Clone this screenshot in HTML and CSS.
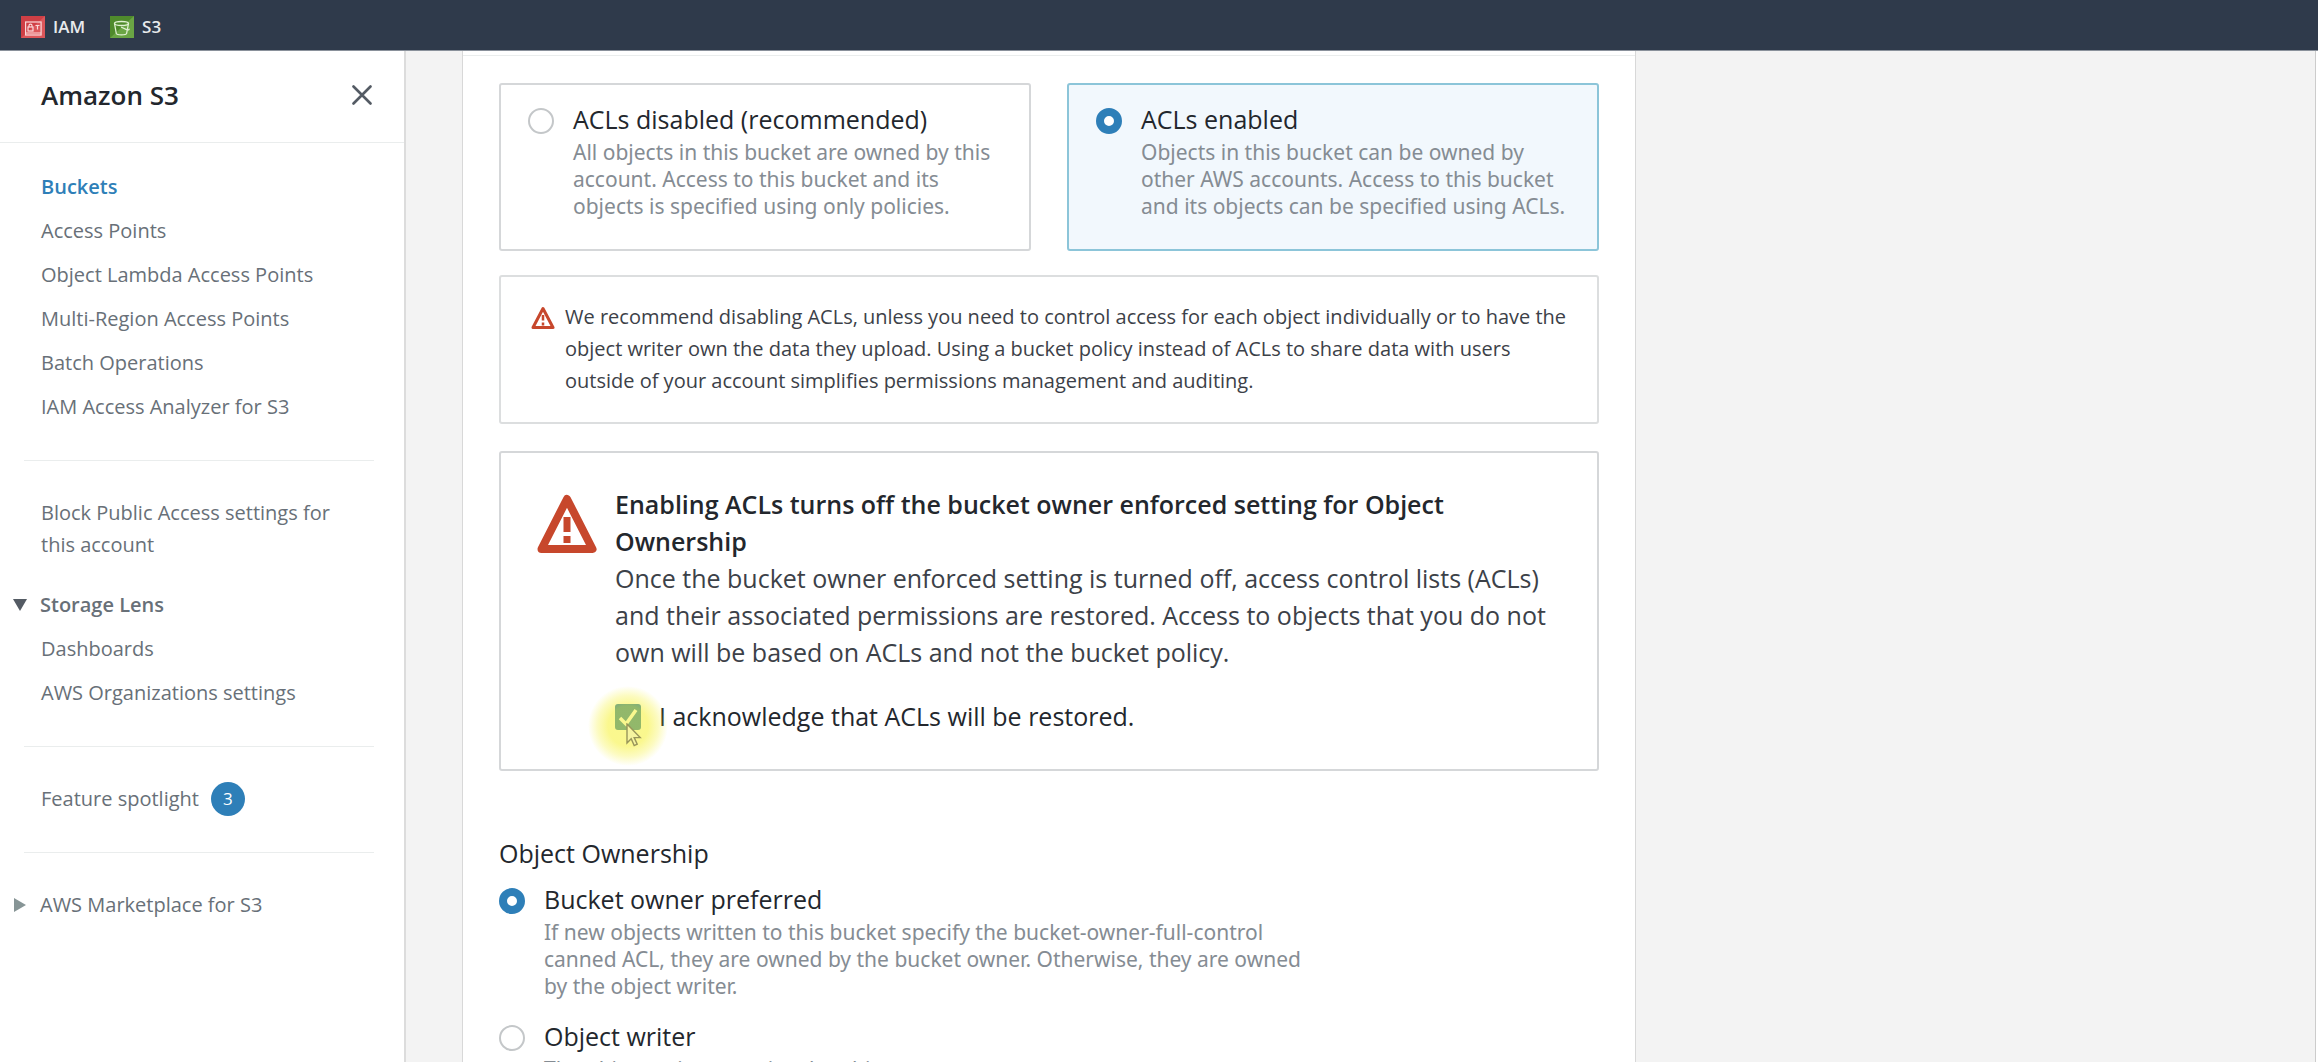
FILE: index.html
```html
<!DOCTYPE html>
<html lang="en">
<head>
<meta charset="utf-8">
<title>Amazon S3</title>
<link rel="stylesheet" href="styles.css">
</head>
<body>
<header class="topbar">
  <a class="shortcut" href="#iam">
    <svg class="service-icon" viewBox="0 0 24 22" aria-hidden="true">
      <rect width="24" height="22" fill="#cf3f45"/>
      <path d="M0 22L24 0v22z" fill="#dc565a"/>
      <g fill="none" stroke="#fbd9da" stroke-width="1.2">
        <rect x="4.600" y="6" width="15.500" height="13"/>
        <rect x="7" y="11" width="5" height="4"/>
        <path d="M8 11V9.600a1.500 1.500 0 0 1 3 0V11M14.500 9.500h4M16.500 9.500v4M5 17h15"/>
      </g>
    </svg>
    IAM
  </a>
  <a class="shortcut" href="#s3">
    <svg class="service-icon" viewBox="0 0 24 22" aria-hidden="true">
      <rect width="24" height="22" fill="#4f8a2c"/>
      <path d="M0 22L24 0v22z" fill="#6aa544"/>
      <g fill="none" stroke="#e0f0d2" stroke-width="1.300">
        <ellipse cx="11.500" cy="7.500" rx="7" ry="2"/>
        <path d="M4.500 7.500l1.800 10c.3 1.800 10 1.800 10.300 0l1.900-10M11 11l5.500 2.600c2 .8 3 .2 2.400-.9"/>
      </g>
    </svg>
    S3
  </a>
</header>
<div class="layout">
  <aside class="sidebar">
    <div class="sidebar-head">
      <h2 class="sidebar-title">Amazon S3</h2>
      <button class="close" type="button" aria-label="Close navigation">
        <svg viewBox="0 0 20 20" width="20" height="20" aria-hidden="true"><path d="M1.500 1.500l17 17M18.500 1.500l-17 17" stroke="#545b64" stroke-width="2.600" stroke-linecap="round"/></svg>
      </button>
    </div>
    <nav class="nav">
      <ul class="nav-list">
        <li><a class="current" href="#buckets">Buckets</a></li>
        <li><a href="#access-points">Access Points</a></li>
        <li><a href="#lambda">Object Lambda Access Points</a></li>
        <li><a href="#multi-region">Multi-Region Access Points</a></li>
        <li><a href="#batch">Batch Operations</a></li>
        <li><a href="#analyzer">IAM Access Analyzer for S3</a></li>
      </ul>
      <hr class="divider">
      <ul class="nav-list">
        <li><a href="#block-public">Block Public Access settings for this account</a></li>
      </ul>
      <button class="section open" type="button" aria-expanded="true">
        <svg viewBox="0 0 14 14" width="14" height="14" aria-hidden="true"><path d="M0 1h14L7 13z" fill="#545b64"/></svg>Storage Lens
      </button>
      <ul class="nav-list">
        <li><a href="#dashboards">Dashboards</a></li>
        <li><a href="#organizations">AWS Organizations settings</a></li>
      </ul>
      <hr class="divider">
      <ul class="nav-list">
        <li><a class="with-badge" href="#spotlight">Feature spotlight <span class="badge">3</span></a></li>
      </ul>
      <hr class="divider">
      <button class="section" type="button" aria-expanded="false">
        <svg viewBox="0 0 14 14" width="14" height="14" aria-hidden="true"><path d="M1 0v14L13 7z" fill="#879596"/></svg>AWS Marketplace for S3
      </button>
    </nav>
  </aside>
  <main class="main">
    <section class="panel">
      <div class="panel-head"></div>
      <div class="panel-body">
      <div class="tiles">
        <label class="tile">
          <input class="radio" type="radio" name="acl">
          <span class="choice-text"><span class="choice-title">ACLs disabled (recommended)</span>
          <span class="choice-desc">All objects in this bucket are owned by this account. Access to this bucket and its objects is specified using only policies.</span></span>
        </label>
        <label class="tile selected">
          <input class="radio" type="radio" name="acl" checked>
          <span class="choice-text"><span class="choice-title">ACLs enabled</span>
          <span class="choice-desc">Objects in this bucket can be owned by other AWS accounts. Access to this bucket and its objects can be specified using ACLs.</span></span>
        </label>
      </div>
      <div class="notice">
        <svg class="notice-icon" viewBox="0 0 48 48" aria-hidden="true"><path d="M24 5L44 43H4z" fill="none" stroke="#c7472c" stroke-width="6" stroke-linejoin="round"/><path d="M24 18v11M24 33v6" stroke="#c7472c" stroke-width="5"/></svg>
        <p class="notice-text">We recommend disabling ACLs, unless you need to control access for each object individually or to have the object writer own the data they upload. Using a bucket policy instead of ACLs to share data with users outside of your account simplifies permissions management and auditing.</p>
      </div>
      <div class="confirm">
        <svg class="confirm-icon" viewBox="0 0 60 60" aria-hidden="true"><path d="M30 5L55.500 55H4.500z" fill="none" stroke="#c7472c" stroke-width="8" stroke-linejoin="round"/><path d="M30 23v15M30 42v7" stroke="#c7472c" stroke-width="7"/></svg>
        <div class="confirm-body">
          <h3 class="confirm-title">Enabling ACLs turns off the bucket owner enforced setting for Object Ownership</h3>
          <p class="confirm-text">Once the bucket owner enforced setting is turned off, access control lists (ACLs) and their associated permissions are restored. Access to objects that you do not own will be based on ACLs and not the bucket policy.</p>
          <label class="ack">
            <span class="ack-box"><input class="checkbox" type="checkbox" checked>
              <svg class="tick" viewBox="0 0 26 26" aria-hidden="true"><path d="M5 14l6 6L21 6" fill="none" stroke="#fff" stroke-width="3.500"/></svg>
              <span class="halo"></span>
              <svg class="pointer" viewBox="0 0 16 24" aria-hidden="true"><path d="M1 1v19l4.200-4.200 3 6.800 3-1.400-3-6.600h6z" fill="#f6f4a0" stroke="#98955a" stroke-width="1.400"/></svg>
            </span>
            I acknowledge that ACLs will be restored.
          </label>
        </div>
      </div>
      <fieldset class="ownership">
        <legend class="legend">Object Ownership</legend>
        <label class="choice">
          <input class="radio" type="radio" name="owner" checked>
          <span class="choice-text"><span class="choice-title">Bucket owner preferred</span>
          <span class="choice-desc">If new objects written to this bucket specify the bucket-owner-full-control canned ACL, they are owned by the bucket owner. Otherwise, they are owned by the object writer.</span></span>
        </label>
        <label class="choice">
          <input class="radio" type="radio" name="owner">
          <span class="choice-text"><span class="choice-title">Object writer</span>
          <span class="choice-desc">The object writer remains the object owner.</span></span>
        </label>
      </fieldset>
      </div>
    </section>
  </main>
  <aside class="tools"></aside>
</div>
</body>
</html>
```
FILE: styles.css
```css
* { box-sizing: border-box; }
body {
  margin: 0;
  height: 100vh;
  display: flex;
  flex-direction: column;
  overflow: hidden;
  background: #f3f3f3;
  color: #23272d;
  font: 20px/32px "Open Sans", "Noto Sans", sans-serif;
}
h2, h3, p, ul { margin: 0; padding: 0; }
ul { list-style: none; }
a { color: inherit; text-decoration: none; }
button { font: inherit; color: inherit; border: 0; padding: 0; background: none; cursor: pointer; }
label { cursor: pointer; }

.topbar {
  flex: none;
  display: flex;
  gap: 25px;
  height: 51px;
  padding: 3px 21px 0;
  background: #2f3a4b;
  border-bottom: 1px solid #8a919b;
  color: #e8eaed;
  font-size: 17px;
  font-weight: 600;
}
.shortcut { display: flex; align-items: center; gap: 8px; }
.service-icon { width: 24px; height: 22px; }

.layout { flex: 1; min-height: 0; display: flex; }
.sidebar { flex: none; width: 406px; background: #fff; border-right: 2px solid #dcdcdc; overflow: hidden; }
.sidebar-head {
  display: flex;
  align-items: center;
  justify-content: space-between;
  height: 92px;
  padding: 0 32px 4px 41px;
  border-bottom: 1px solid #eaeded;
}
.sidebar-title { font-size: 26px; line-height: 36px; font-weight: 600; }
.close { display: flex; }
.nav { padding-top: 22px; color: #687078; }
.nav-list { padding: 0 64px 0 41px; }
.nav-list li { padding: 6px 0; }
.current { color: #2e7fb8; font-weight: 600; }
.divider { margin: 31px 30px 30px 24px; border: 0; border-top: 1px solid #eaeded; }
.section { display: flex; align-items: center; gap: 13px; padding: 6px 13px; }
.section.open { margin-top: 16px; font-weight: 600; color: #687078; }
.with-badge { display: flex; align-items: center; gap: 12px; }
.badge {
  display: grid;
  place-items: center;
  width: 34px;
  height: 34px;
  margin: -1px 0;
  border-radius: 50%;
  background: #2e7fb8;
  color: #fff;
  font-size: 17px;
}

.main { flex: 1; min-width: 0; padding-left: 56px; overflow: hidden; }
.tools { flex: none; width: 3px; background: #fff; border-left: 1px solid #ccc; }
.panel { max-width: 1174px; background: #fff; border: solid #d8d8d8; border-width: 0 1px 1px; }
.panel-head { height: 5px; border-bottom: 1px solid #eaeded; }
.panel-body { padding: 27px 36px 40px; }
.tiles { display: grid; grid-template-columns: 1fr 1fr; gap: 36px; }
.tile, .choice { display: flex; gap: 19px; }
.tile { min-height: 168px; padding: 16px 28px 16px 27px; border: 2px solid #d5d7d9; border-radius: 3px; }
.tile.selected { border-color: #8cc5d9; background: #f2f8fd; }
.radio {
  appearance: none;
  flex: none;
  width: 26px;
  height: 26px;
  margin: 7px 0 0;
  border: 2px solid #c4c7c9;
  border-radius: 50%;
  background: #fff;
}
.radio:checked { border: 8px solid #2e7fb8; }
.choice-text { display: flex; flex-direction: column; gap: 2px; }
.choice-title { font-size: 25px; line-height: 36px; }
.choice-desc { font-family: "Noto Sans", sans-serif; font-size: 21px; line-height: 27px; color: #858c93; }

.notice { display: flex; gap: 10px; margin-top: 24px; padding: 24px 24px 25px 30px; border: 2px solid #dcdedf; border-radius: 3px; }
.notice-icon { flex: none; width: 24px; height: 24px; margin-top: 5px; }
.notice-text { color: #3c4148; }

.confirm { display: flex; gap: 18px; margin-top: 27px; padding: 33px 48px 34px 36px; border: 2px solid #d5d7d9; border-radius: 3px; font-size: 25px; line-height: 37px; }
.confirm-icon { flex: none; width: 60px; height: 60px; margin-top: 8px; }
.confirm-title { font-size: 25px; font-weight: 600; }
.confirm-text { color: #3c4148; }
.ack { display: flex; align-items: center; gap: 18px; margin-top: 27px; }
.ack-box { position: relative; display: flex; }
.checkbox { appearance: none; width: 26px; height: 26px; margin: 0; border-radius: 3px; background: #2e7fb8; }
.tick { position: absolute; left: 0; top: 0; width: 26px; height: 26px; }
.halo {
  position: absolute;
  left: -27px;
  top: -18px;
  width: 80px;
  height: 80px;
  border-radius: 50%;
  background: radial-gradient(circle closest-side, rgba(245, 240, 30, .5) 50%, rgba(245, 240, 30, .28) 76%, rgba(245, 240, 30, 0));
}
.pointer { position: absolute; left: 11px; top: 19px; width: 16px; height: 24px; }

.ownership { margin: 64px 0 0; padding: 0; border: 0; }
.legend { padding: 0; font-size: 25px; line-height: 36px; }
.choice { max-width: 820px; margin-top: 10px; }
.choice + .choice { margin-top: 18px; }
```
